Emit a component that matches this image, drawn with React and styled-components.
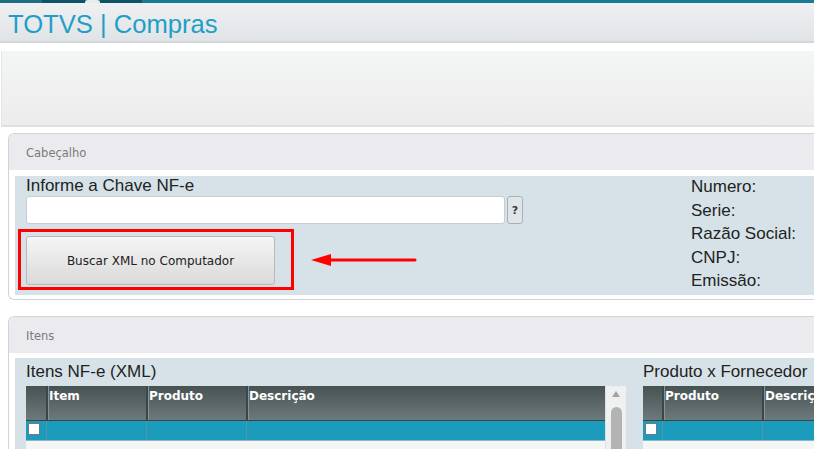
import React from 'react';
import styled, { createGlobalStyle } from 'styled-components';

const GlobalStyle = createGlobalStyle`
  html, body {
    margin: 0;
    padding: 0;
    background: #ffffff;
    overflow: hidden;
  }
  * { box-sizing: border-box; }
`;

const Page = styled.div`
  width: 100vw;
  height: 100vh;
  overflow: hidden;
  font-family: "Liberation Sans", Arial, sans-serif;
  color: #222;
`;

// top teal strip with the little tab notch
const TopStrip = styled.div`
  display: flex;
  height: 3px;
  background: #1a7c94;
`;

const StripPart = styled.div`
  width: ${({ w }) => w}px;
  background: ${({ c }) => c};
  border-radius: ${({ notch }) => (notch ? '8px 8px 0 0' : '0')};
`;

const TitleBar = styled.div`
  height: 40px;
  padding: 3px 0 0 8px;
  display: flex;
  align-items: center;
  background: linear-gradient(#eef0f2, #e1e4e7);
  border-bottom: 2px solid #d4d7da;
`;

const AppTitle = styled.div`
  font-size: 25.6px;
  line-height: 30px;
  color: #1f9fc6;
`;

const Toolbar = styled.div`
  margin: 8px 0 0 1px;
  height: 76px;
  background: linear-gradient(#f4f5f5, #ececed);
  border-bottom: 2px solid #dedfe0;
  border-left: 1px solid #e4e6e6;
`;

const Panels = styled.div`
  display: flex;
  flex-direction: column;
  gap: 16px;
  padding: 6px 0 0 8px;
`;

const Panel = styled.section`
  border: 1px solid #d2d3d5;
  border-right: none;
  border-radius: 6px 0 0 6px;
  background: #fff;
  overflow: hidden;
`;

const PanelHeader = styled.div`
  height: 36px;
  display: flex;
  align-items: center;
  padding: 2px 0 0 17px;
  background: #ebebef;
  font-family: "DejaVu Sans", Verdana, sans-serif;
  font-size: 11.5px;
  color: #7a7a7a;
`;

const PanelBody = styled.div`
  padding: ${({ pad }) => pad} 0 4px 6px;
`;

const Content = styled.div`
  background: #d6e2e8;
  display: grid;
  grid-template-columns: ${({ cols }) => cols};
  column-gap: ${({ gap }) => gap || 0}px;
  height: ${({ h }) => h}px;
  padding-left: 11px;
`;

const Column = styled.div`
  display: flex;
  flex-direction: column;
  align-items: flex-start;
  min-width: 0;
`;

const FieldLabel = styled.div`
  font-size: 17px;
  line-height: ${({ lh }) => lh || 20}px;
  color: #222;
  white-space: nowrap;
`;

const InfoList = styled.div`
  margin-top: -1px;
`;

const InputRow = styled.div`
  display: flex;
  gap: 2px;
`;

const TextInput = styled.div`
  width: 479px;
  height: 28px;
  background: #fff;
  border: 1px solid #c7cdd0;
  border-radius: 3px;
`;

const HelpButton = styled.div`
  width: 16px;
  height: 28px;
  border: 1px solid #a9b1b5;
  border-radius: 3px;
  background: #dfe5e8;
  display: flex;
  align-items: center;
  justify-content: center;
  font-family: "DejaVu Sans", Verdana, sans-serif;
  font-size: 11px;
  font-weight: bold;
  color: #3a3a3a;
`;

const ActionRow = styled.div`
  display: flex;
  align-items: center;
  gap: 17px;
  margin: 5px 0 0 -8px;
`;

const Highlight = styled.div`
  border: 3px solid #ff0000;
  padding: 4px 16px 2px 5px;
`;

const Button = styled.div`
  width: 249px;
  height: 49px;
  display: flex;
  align-items: center;
  justify-content: center;
  background: linear-gradient(#f5f5f5, #dadada);
  border: 1px solid #b9b9b9;
  border-radius: 3px;
  font-family: "DejaVu Sans", Verdana, sans-serif;
  font-size: 12px;
  color: #222;
`;

const Arrow = () => (
  <svg width="106" height="14" viewBox="0 0 106 14">
    <line x1="16" y1="7" x2="104" y2="7" stroke="#ff0000" strokeWidth="3" strokeLinecap="round" />
    <polygon points="0,7 20,1 20,13" fill="#ff0000" />
  </svg>
);

const ListTitle = styled.div`
  height: 28px;
  line-height: 28px;
  font-size: 17px;
  color: #222;
  white-space: nowrap;
`;

const TableWrap = styled.div`
  display: flex;
  width: ${({ w }) => (w ? `${w}px` : '100%')};
  flex: 1;
`;

const Table = styled.div`
  flex: 1;
  background: #f4f5f5;
  overflow: hidden;
`;

const Row = styled.div`
  display: grid;
  grid-template-columns: ${({ cols }) => cols};
  height: ${({ head }) => (head ? 35 : 20)}px;
  background: ${({ head }) => (head ? 'linear-gradient(#475252, #6d7a7b)' : '#1b9cbc')};
  border-bottom: 1px solid ${({ head }) => (head ? '#3c4545' : '#8fb8c4')};
`;

const Cell = styled.div`
  border-left: ${({ first, head }) => (first ? 'none' : head ? '2px solid #3d4646' : '1px solid #5795a6')};
  box-shadow: ${({ first, head }) => (!first && head ? 'inset 1px 0 0 #879394' : 'none')};
  padding: ${({ first }) => (first ? '2px 0 0 2px' : '3px 0 0 1px')};
  font-family: "DejaVu Sans", Verdana, sans-serif;
  font-size: 12px;
  font-weight: bold;
  color: #fff;
  white-space: nowrap;
  overflow: hidden;
`;

const Check = styled.div`
  width: 12px;
  height: 12px;
  background: #fff;
  border: 1px solid #6f7b7e;
`;

const ScrollBar = styled.div`
  width: 20px;
  margin-left: 1px;
  background: #eff0f0;
  display: flex;
  flex-direction: column;
  align-items: center;
`;

const ScrollArrow = styled.div`
  width: 0;
  height: 0;
  margin-top: 5px;
  border-left: 4px solid transparent;
  border-right: 4px solid transparent;
  border-bottom: 6px solid #a3a3a3;
`;

const ScrollThumb = styled.div`
  width: 11px;
  flex: 1;
  margin-top: 10px;
  background: #b3b3b3;
  border-radius: 6px 6px 0 0;
`;

const GridTable = ({ cols, headers, scroll, w }) => (
  <TableWrap w={w}>
    <Table>
      <Row head cols={cols}>
        <Cell head first />
        {headers.map((h) => (
          <Cell head key={h}>{h}</Cell>
        ))}
      </Row>
      <Row cols={cols}>
        <Cell first>
          <Check />
        </Cell>
        {headers.map((h) => (
          <Cell key={h} />
        ))}
      </Row>
    </Table>
    {scroll && (
      <ScrollBar>
        <ScrollArrow />
        <ScrollThumb />
      </ScrollBar>
    )}
  </TableWrap>
);

const infoFields = ['Numero:', 'Serie:', 'Razão Social:', 'CNPJ:', 'Emissão:'];

const strip = [
  { w: 42, c: '#1f6f84' },
  { w: 43, c: '#0e5367' },
  { w: 15, c: '#e9ebed', notch: true },
  { w: 42, c: '#0e5367' },
];

export default function App() {
  return (
    <Page>
      <GlobalStyle />
      <TopStrip>
        {strip.map((s, i) => (
          <StripPart key={i} w={s.w} c={s.c} notch={s.notch} />
        ))}
      </TopStrip>
      <TitleBar>
        <AppTitle>TOTVS | Compras</AppTitle>
      </TitleBar>
      <Toolbar />

      <Panels>
        <Panel>
          <PanelHeader>Cabeçalho</PanelHeader>
          <PanelBody pad="6px">
            <Content cols="665px 1fr" h={119}>
              <Column>
                <FieldLabel>Informe a Chave NF-e</FieldLabel>
                <InputRow>
                  <TextInput />
                  <HelpButton>?</HelpButton>
                </InputRow>
                <ActionRow>
                  <Highlight>
                    <Button>Buscar XML no Computador</Button>
                  </Highlight>
                  <Arrow />
                </ActionRow>
              </Column>
              <InfoList>
                {infoFields.map((f) => (
                  <FieldLabel key={f} lh={23.6}>{f}</FieldLabel>
                ))}
              </InfoList>
            </Content>
          </PanelBody>
        </Panel>

        <Panel>
          <PanelHeader>Itens</PanelHeader>
          <PanelBody pad="5px">
            <Content cols="600px 1fr" gap={17} h={120}>
              <Column>
                <ListTitle>Itens NF-e (XML)</ListTitle>
                <GridTable w={600} scroll cols="20px 100px 100px 1fr" headers={['Item', 'Produto', 'Descrição']} />
              </Column>
              <Column>
                <ListTitle>Produto x Fornecedor</ListTitle>
                <GridTable cols="19px 100px 1fr" headers={['Produto', 'Descrição']} />
              </Column>
            </Content>
          </PanelBody>
        </Panel>
      </Panels>
    </Page>
  );
}
